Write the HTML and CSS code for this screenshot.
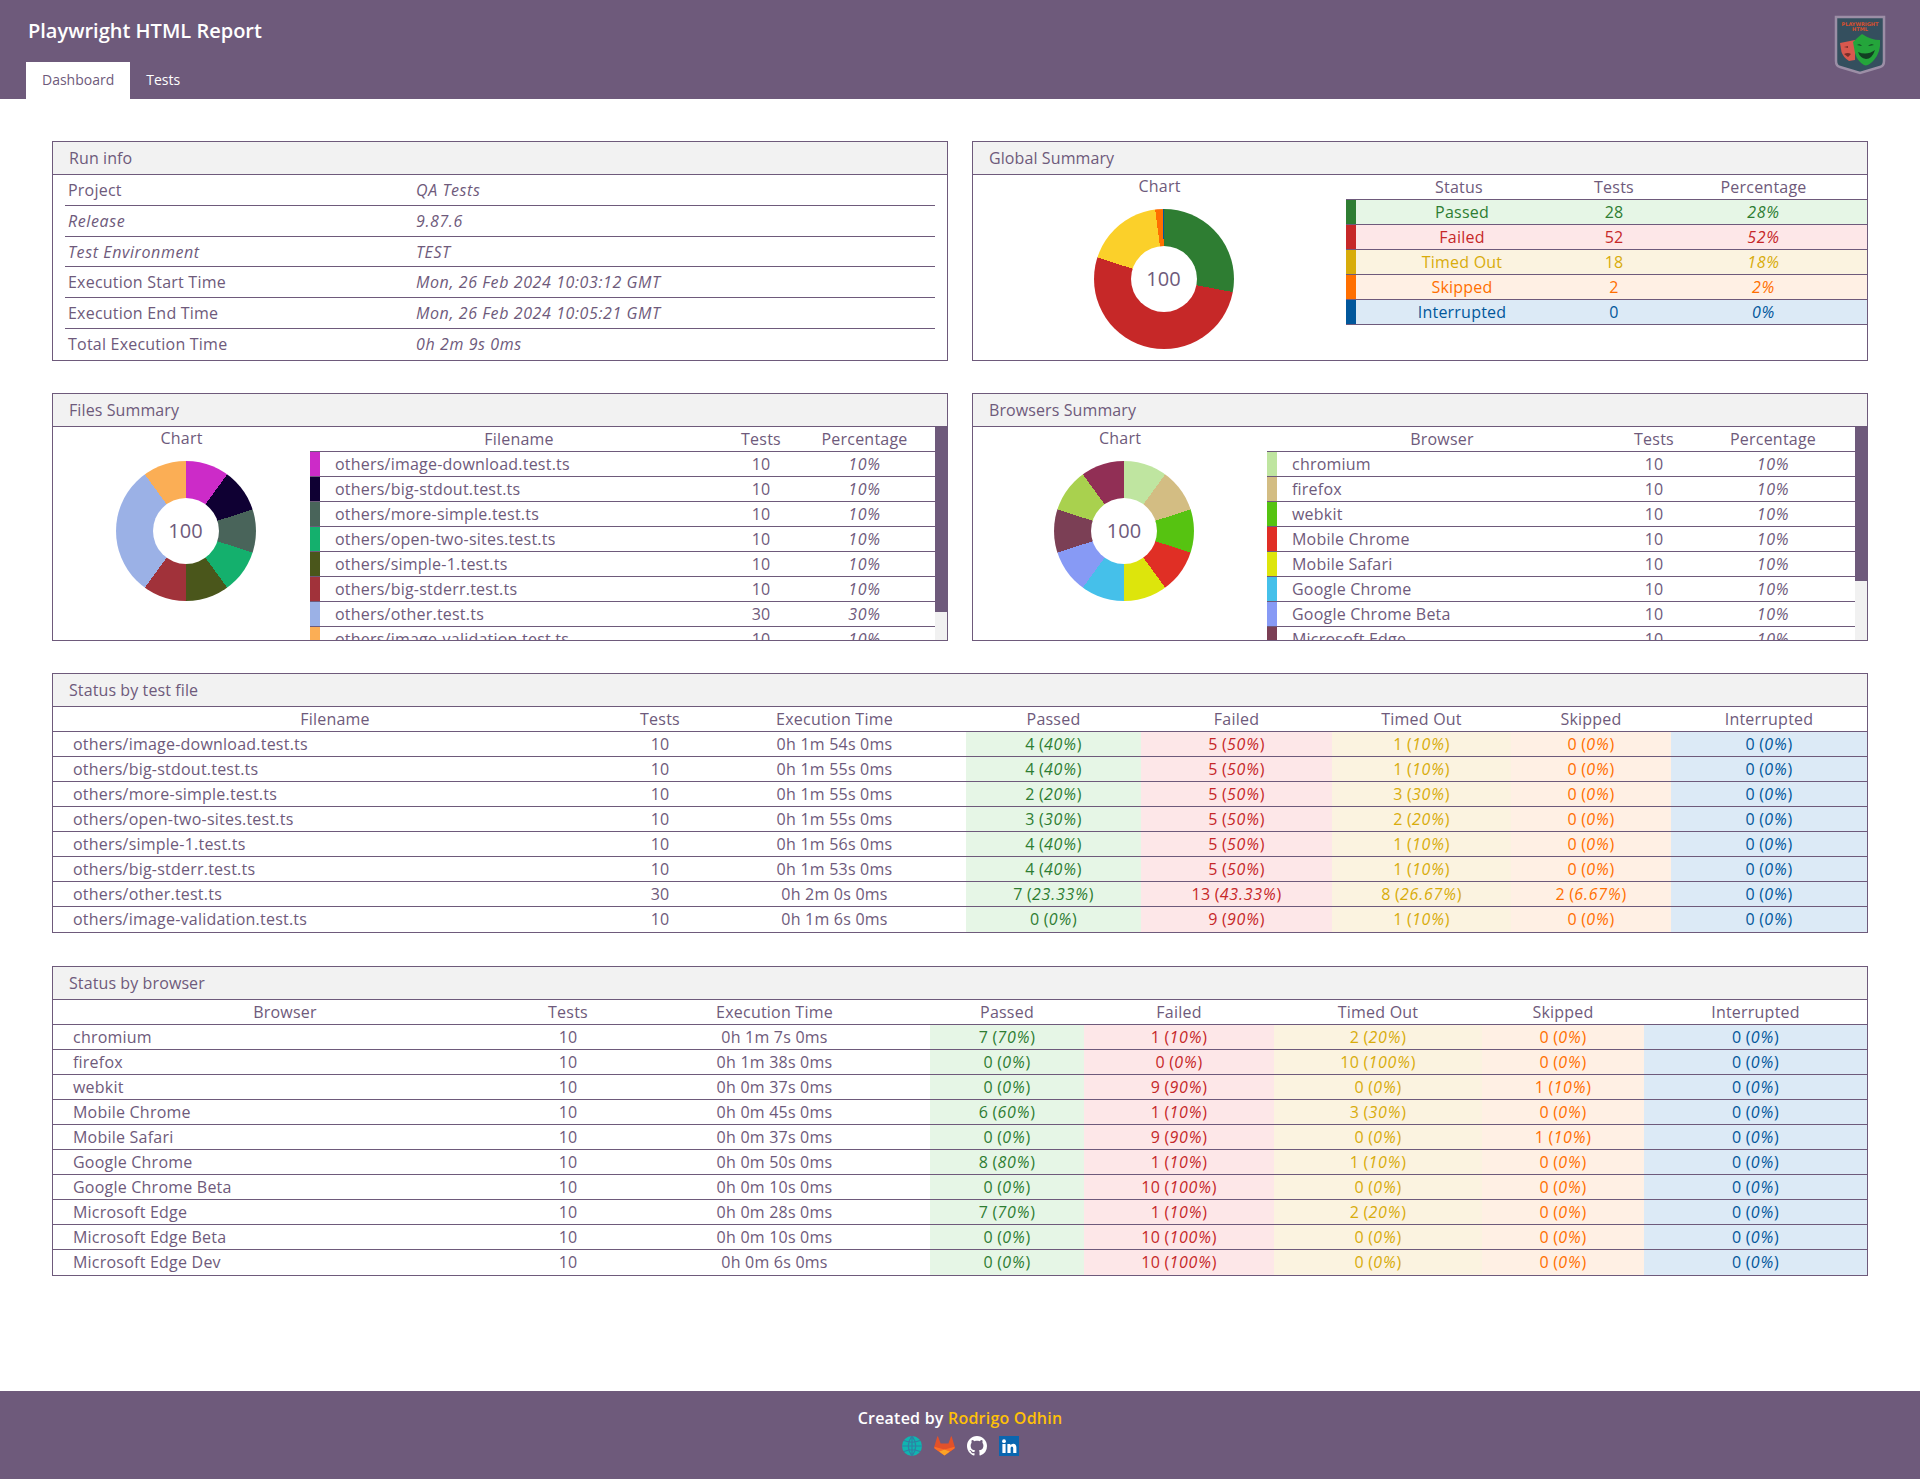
FILE: index.html
```html
<!DOCTYPE html>
<html lang="en">
<head>
  <meta charset="UTF-8">
  <title>Playwright HTML Report</title>
  <link rel="stylesheet" href="styles.css">
</head>
<body>
<header class="topbar">
  <div class="topbar-row">
    <h1 class="brand">Playwright HTML Report</h1>
    <svg class="logo" width="52" height="60" viewBox="0 0 52 60">
      <path d="M2 2H50V46Q50 51 46 52L26 58L6 52Q2 51 2 46Z" fill="#344f5e" stroke="#9c8ea6" stroke-width="2.5"/>
      <text x="26" y="11" class="logo-text" text-anchor="middle">PLAYWRIGHT</text>
      <text x="26" y="16" class="logo-text" text-anchor="middle">HTML</text>
      <path d="M6 28L21 25L21 45L15 46Q9 42 7.500 37Z" fill="#d9584e"/>
      <path d="M10 32L14 31L14 33ZM10 39Q14 37 17 39L14 42Z" fill="#7a2e2a"/>
      <path d="M19 27Q23 23 28 19Q37 25 46 25Q47 37 40 45Q34 52 30 50Q23 46 21 38Z" fill="#24a53b"/>
      <path d="M23 30Q26 28 28 31Z M34 31Q37 28 40 30Z M24 37Q33 41 41 35Q38 44 32 44Q26 43 24 37Z" fill="#123f22"/>
    </svg>
  </div>
  <nav class="tabs">
    <a class="tab tab-active">Dashboard</a>
    <a class="tab">Tests</a>
  </nav>
</header>

<main class="content">
  <div class="top-grid">
    <section class="card">
      <div class="card-title">Run info</div>
      <div class="info">
        <div class="info-row"><span class="info-key">Project</span><em>QA Tests</em></div>
        <div class="info-row"><em class="info-key">Release</em><em>9.87.6</em></div>
        <div class="info-row"><em class="info-key">Test Environment</em><em>TEST</em></div>
        <div class="info-row"><span class="info-key">Execution Start Time</span><em>Mon, 26 Feb 2024 10:03:12 GMT</em></div>
        <div class="info-row"><span class="info-key">Execution End Time</span><em>Mon, 26 Feb 2024 10:05:21 GMT</em></div>
        <div class="info-row"><span class="info-key">Total Execution Time</span><em>0h 2m 9s 0ms</em></div>
      </div>
    </section>

    <section class="card">
      <div class="card-title">Global Summary</div>
      <div class="split">
        <div class="chart-col chart-global">
          <div class="chart-head">Chart</div>
          <div class="donut donut-global"><span>100</span></div>
        </div>
        <table class="grid grid-global">
          <colgroup><col class="w10"><col style="width:212px"><col style="width:92px"><col></colgroup>
          <tr><th colspan="2">Status</th><th>Tests</th><th>Percentage</th></tr>
          <tr class="passed"><td class="bar"></td><td>Passed</td><td>28</td><td><em>28%</em></td></tr>
          <tr class="failed"><td class="bar"></td><td>Failed</td><td>52</td><td><em>52%</em></td></tr>
          <tr class="timedout"><td class="bar"></td><td>Timed Out</td><td>18</td><td><em>18%</em></td></tr>
          <tr class="skipped"><td class="bar"></td><td>Skipped</td><td>2</td><td><em>2%</em></td></tr>
          <tr class="interrupted"><td class="bar"></td><td>Interrupted</td><td>0</td><td><em>0%</em></td></tr>
        </table>
      </div>
    </section>

    <section class="card">
      <div class="card-title">Files Summary</div>
      <div class="scroll-wrap">
        <div class="scroller">
          <div class="split">
            <div class="chart-col chart-files">
              <div class="chart-head">Chart</div>
              <div class="donut donut-files"><span>100</span></div>
            </div>
            <table class="grid grid-files">
              <colgroup><col class="w10"><col style="width:408px"><col style="width:66px"><col></colgroup>
              <tr><th colspan="2">Filename</th><th>Tests</th><th>Percentage</th></tr>
              <tr><td class="bar" style="background:#cc2bc8"></td><td class="name">others/image-download.test.ts</td><td>10</td><td><em>10%</em></td></tr>
              <tr><td class="bar" style="background:#0f0033"></td><td class="name">others/big-stdout.test.ts</td><td>10</td><td><em>10%</em></td></tr>
              <tr><td class="bar" style="background:#49645a"></td><td class="name">others/more-simple.test.ts</td><td>10</td><td><em>10%</em></td></tr>
              <tr><td class="bar" style="background:#14b06d"></td><td class="name">others/open-two-sites.test.ts</td><td>10</td><td><em>10%</em></td></tr>
              <tr><td class="bar" style="background:#4a561b"></td><td class="name">others/simple-1.test.ts</td><td>10</td><td><em>10%</em></td></tr>
              <tr><td class="bar" style="background:#a1323a"></td><td class="name">others/big-stderr.test.ts</td><td>10</td><td><em>10%</em></td></tr>
              <tr><td class="bar" style="background:#9bb1e6"></td><td class="name">others/other.test.ts</td><td>30</td><td><em>30%</em></td></tr>
              <tr><td class="bar" style="background:#fbae55"></td><td class="name">others/image-validation.test.ts</td><td>10</td><td><em>10%</em></td></tr>
            </table>
          </div>
        </div>
        <div class="track"><div class="thumb" style="height:185px"></div></div>
      </div>
    </section>

    <section class="card">
      <div class="card-title">Browsers Summary</div>
      <div class="scroll-wrap">
        <div class="scroller">
          <div class="split">
            <div class="chart-col chart-browsers">
              <div class="chart-head">Chart</div>
              <div class="donut donut-browsers"><span>100</span></div>
            </div>
            <table class="grid grid-browsers">
              <colgroup><col class="w10"><col style="width:340px"><col style="width:74px"><col></colgroup>
              <tr><th colspan="2">Browser</th><th>Tests</th><th>Percentage</th></tr>
              <tr><td class="bar" style="background:#bfe5a0"></td><td class="name">chromium</td><td>10</td><td><em>10%</em></td></tr>
              <tr><td class="bar" style="background:#d3bd83"></td><td class="name">firefox</td><td>10</td><td><em>10%</em></td></tr>
              <tr><td class="bar" style="background:#56c311"></td><td class="name">webkit</td><td>10</td><td><em>10%</em></td></tr>
              <tr><td class="bar" style="background:#e02f25"></td><td class="name">Mobile Chrome</td><td>10</td><td><em>10%</em></td></tr>
              <tr><td class="bar" style="background:#dde50c"></td><td class="name">Mobile Safari</td><td>10</td><td><em>10%</em></td></tr>
              <tr><td class="bar" style="background:#45c0ea"></td><td class="name">Google Chrome</td><td>10</td><td><em>10%</em></td></tr>
              <tr><td class="bar" style="background:#879af5"></td><td class="name">Google Chrome Beta</td><td>10</td><td><em>10%</em></td></tr>
              <tr><td class="bar" style="background:#7b3f55"></td><td class="name">Microsoft Edge</td><td>10</td><td><em>10%</em></td></tr>
              <tr><td class="bar" style="background:#a9d14e"></td><td class="name">Microsoft Edge Beta</td><td>10</td><td><em>10%</em></td></tr>
              <tr><td class="bar" style="background:#912f55"></td><td class="name">Microsoft Edge Dev</td><td>10</td><td><em>10%</em></td></tr>
            </table>
          </div>
        </div>
        <div class="track"><div class="thumb" style="height:154px"></div></div>
      </div>
    </section>
  </div>

  <section class="card card-wide">
    <div class="card-title">Status by test file</div>
    <table class="grid grid-status">
      <colgroup><col style="width:564px"><col style="width:86px"><col style="width:263px"><col style="width:175px"><col style="width:191px"><col style="width:179px"><col style="width:160px"><col></colgroup>
      <tr><th>Filename</th><th>Tests</th><th>Execution Time</th><th>Passed</th><th>Failed</th><th>Timed Out</th><th>Skipped</th><th>Interrupted</th></tr>
      <tr><td class="left">others/image-download.test.ts</td><td>10</td><td>0h 1m 54s 0ms</td><td class="passed">4 (<em>40%</em>)</td><td class="failed">5 (<em>50%</em>)</td><td class="timedout">1 (<em>10%</em>)</td><td class="skipped">0 (<em>0%</em>)</td><td class="interrupted">0 (<em>0%</em>)</td></tr>
      <tr><td class="left">others/big-stdout.test.ts</td><td>10</td><td>0h 1m 55s 0ms</td><td class="passed">4 (<em>40%</em>)</td><td class="failed">5 (<em>50%</em>)</td><td class="timedout">1 (<em>10%</em>)</td><td class="skipped">0 (<em>0%</em>)</td><td class="interrupted">0 (<em>0%</em>)</td></tr>
      <tr><td class="left">others/more-simple.test.ts</td><td>10</td><td>0h 1m 55s 0ms</td><td class="passed">2 (<em>20%</em>)</td><td class="failed">5 (<em>50%</em>)</td><td class="timedout">3 (<em>30%</em>)</td><td class="skipped">0 (<em>0%</em>)</td><td class="interrupted">0 (<em>0%</em>)</td></tr>
      <tr><td class="left">others/open-two-sites.test.ts</td><td>10</td><td>0h 1m 55s 0ms</td><td class="passed">3 (<em>30%</em>)</td><td class="failed">5 (<em>50%</em>)</td><td class="timedout">2 (<em>20%</em>)</td><td class="skipped">0 (<em>0%</em>)</td><td class="interrupted">0 (<em>0%</em>)</td></tr>
      <tr><td class="left">others/simple-1.test.ts</td><td>10</td><td>0h 1m 56s 0ms</td><td class="passed">4 (<em>40%</em>)</td><td class="failed">5 (<em>50%</em>)</td><td class="timedout">1 (<em>10%</em>)</td><td class="skipped">0 (<em>0%</em>)</td><td class="interrupted">0 (<em>0%</em>)</td></tr>
      <tr><td class="left">others/big-stderr.test.ts</td><td>10</td><td>0h 1m 53s 0ms</td><td class="passed">4 (<em>40%</em>)</td><td class="failed">5 (<em>50%</em>)</td><td class="timedout">1 (<em>10%</em>)</td><td class="skipped">0 (<em>0%</em>)</td><td class="interrupted">0 (<em>0%</em>)</td></tr>
      <tr><td class="left">others/other.test.ts</td><td>30</td><td>0h 2m 0s 0ms</td><td class="passed">7 (<em>23.33%</em>)</td><td class="failed">13 (<em>43.33%</em>)</td><td class="timedout">8 (<em>26.67%</em>)</td><td class="skipped">2 (<em>6.67%</em>)</td><td class="interrupted">0 (<em>0%</em>)</td></tr>
      <tr><td class="left">others/image-validation.test.ts</td><td>10</td><td>0h 1m 6s 0ms</td><td class="passed">0 (<em>0%</em>)</td><td class="failed">9 (<em>90%</em>)</td><td class="timedout">1 (<em>10%</em>)</td><td class="skipped">0 (<em>0%</em>)</td><td class="interrupted">0 (<em>0%</em>)</td></tr>
    </table>
  </section>

  <section class="card card-wide">
    <div class="card-title">Status by browser</div>
    <table class="grid grid-status">
      <colgroup><col style="width:464px"><col style="width:102px"><col style="width:311px"><col style="width:154px"><col style="width:190px"><col style="width:208px"><col style="width:162px"><col></colgroup>
      <tr><th>Browser</th><th>Tests</th><th>Execution Time</th><th>Passed</th><th>Failed</th><th>Timed Out</th><th>Skipped</th><th>Interrupted</th></tr>
      <tr><td class="left">chromium</td><td>10</td><td>0h 1m 7s 0ms</td><td class="passed">7 (<em>70%</em>)</td><td class="failed">1 (<em>10%</em>)</td><td class="timedout">2 (<em>20%</em>)</td><td class="skipped">0 (<em>0%</em>)</td><td class="interrupted">0 (<em>0%</em>)</td></tr>
      <tr><td class="left">firefox</td><td>10</td><td>0h 1m 38s 0ms</td><td class="passed">0 (<em>0%</em>)</td><td class="failed">0 (<em>0%</em>)</td><td class="timedout">10 (<em>100%</em>)</td><td class="skipped">0 (<em>0%</em>)</td><td class="interrupted">0 (<em>0%</em>)</td></tr>
      <tr><td class="left">webkit</td><td>10</td><td>0h 0m 37s 0ms</td><td class="passed">0 (<em>0%</em>)</td><td class="failed">9 (<em>90%</em>)</td><td class="timedout">0 (<em>0%</em>)</td><td class="skipped">1 (<em>10%</em>)</td><td class="interrupted">0 (<em>0%</em>)</td></tr>
      <tr><td class="left">Mobile Chrome</td><td>10</td><td>0h 0m 45s 0ms</td><td class="passed">6 (<em>60%</em>)</td><td class="failed">1 (<em>10%</em>)</td><td class="timedout">3 (<em>30%</em>)</td><td class="skipped">0 (<em>0%</em>)</td><td class="interrupted">0 (<em>0%</em>)</td></tr>
      <tr><td class="left">Mobile Safari</td><td>10</td><td>0h 0m 37s 0ms</td><td class="passed">0 (<em>0%</em>)</td><td class="failed">9 (<em>90%</em>)</td><td class="timedout">0 (<em>0%</em>)</td><td class="skipped">1 (<em>10%</em>)</td><td class="interrupted">0 (<em>0%</em>)</td></tr>
      <tr><td class="left">Google Chrome</td><td>10</td><td>0h 0m 50s 0ms</td><td class="passed">8 (<em>80%</em>)</td><td class="failed">1 (<em>10%</em>)</td><td class="timedout">1 (<em>10%</em>)</td><td class="skipped">0 (<em>0%</em>)</td><td class="interrupted">0 (<em>0%</em>)</td></tr>
      <tr><td class="left">Google Chrome Beta</td><td>10</td><td>0h 0m 10s 0ms</td><td class="passed">0 (<em>0%</em>)</td><td class="failed">10 (<em>100%</em>)</td><td class="timedout">0 (<em>0%</em>)</td><td class="skipped">0 (<em>0%</em>)</td><td class="interrupted">0 (<em>0%</em>)</td></tr>
      <tr><td class="left">Microsoft Edge</td><td>10</td><td>0h 0m 28s 0ms</td><td class="passed">7 (<em>70%</em>)</td><td class="failed">1 (<em>10%</em>)</td><td class="timedout">2 (<em>20%</em>)</td><td class="skipped">0 (<em>0%</em>)</td><td class="interrupted">0 (<em>0%</em>)</td></tr>
      <tr><td class="left">Microsoft Edge Beta</td><td>10</td><td>0h 0m 10s 0ms</td><td class="passed">0 (<em>0%</em>)</td><td class="failed">10 (<em>100%</em>)</td><td class="timedout">0 (<em>0%</em>)</td><td class="skipped">0 (<em>0%</em>)</td><td class="interrupted">0 (<em>0%</em>)</td></tr>
      <tr><td class="left">Microsoft Edge Dev</td><td>10</td><td>0h 0m 6s 0ms</td><td class="passed">0 (<em>0%</em>)</td><td class="failed">10 (<em>100%</em>)</td><td class="timedout">0 (<em>0%</em>)</td><td class="skipped">0 (<em>0%</em>)</td><td class="interrupted">0 (<em>0%</em>)</td></tr>
    </table>
  </section>
</main>

<footer class="footer">
  <div class="credit">Created by <span class="author">Rodrigo Odhin</span></div>
  <div class="socials">
    <svg width="20" height="20" viewBox="0 0 20 20" fill="none">
      <circle cx="10" cy="10" r="10" fill="#0fb5b0"/>
      <path d="M10 0V20M0 10H20M2 4.500Q10 8 18 4.500M2 15.500Q10 12 18 15.500M10 0Q2.500 10 10 20M10 0Q17.500 10 10 20" stroke="#2f7fa3" stroke-width="1.200"/>
    </svg>
    <svg width="21" height="20" viewBox="0 0 21 20">
      <path d="M10.500 19.500L0.600 12.400Q0 11.900 0.200 11.100L3.300 0.600Q3.500 0 4 0.600L6.600 7.500H14.400L17 0.600Q17.500 0 17.700 0.600L20.800 11.100Q21 11.900 20.400 12.400Z" fill="#e2512a"/>
      <path d="M0.300 10.800L10.500 13.500L20.700 10.800L20.400 12.400L16 15.500L10.500 13.500L5 15.500L0.600 12.400Z" fill="#fc6d26"/>
      <path d="M10.500 19.500L5 15.500L10.500 13.500L16 15.500Z" fill="#fca326"/>
    </svg>
    <svg width="20" height="20" viewBox="0 0 16 16">
      <path fill="#fff" d="M8 0C3.58 0 0 3.58 0 8c0 3.54 2.29 6.53 5.47 7.59.4.07.55-.17.55-.38 0-.19-.01-.82-.01-1.49-2.01.37-2.53-.49-2.69-.94-.09-.23-.48-.94-.82-1.13-.28-.15-.68-.52-.01-.53.63-.01 1.08.58 1.23.82.72 1.21 1.87.87 2.33.66.07-.52.28-.87.51-1.07-1.78-.2-3.64-.89-3.64-3.95 0-.87.31-1.59.82-2.15-.08-.2-.36-1.02.08-2.12 0 0 .67-.21 2.2.82.64-.18 1.32-.27 2-.27.68 0 1.36.09 2 .27 1.53-1.04 2.2-.82 2.2-.82.44 1.1.16 1.92.08 2.12.51.56.82 1.27.82 2.15 0 3.07-1.87 3.75-3.65 3.95.29.25.54.73.54 1.48 0 1.07-.01 1.93-.01 2.2 0 .21.15.46.55.38A8.013 8.013 0 0016 8c0-4.42-3.58-8-8-8z"/>
    </svg>
    <svg width="20" height="20" viewBox="0 0 20 20">
      <rect width="20" height="20" fill="#0a66b0"/>
      <circle cx="5" cy="5.200" r="1.900" fill="#fff"/>
      <rect x="3.400" y="8" width="3.200" height="9" fill="#fff"/>
      <path d="M8.400 8H11.400V9.300Q12.400 7.800 14.200 7.800Q17.400 7.800 17.400 11.600V17H14.200V12.200Q14.200 10.400 12.900 10.400Q11.600 10.400 11.600 12.200V17H8.400Z" fill="#fff"/>
    </svg>
  </div>
</footer>
</body>
</html>
```

FILE: styles.css
```css
* { box-sizing: border-box; }
html, body { margin: 0; padding: 0; }
body {
  min-height: 100vh;
  display: flex;
  flex-direction: column;
  font-family: "Open Sans", "Noto Sans", sans-serif;
  font-size: 16px;
  letter-spacing: .22px;
  color: #6e5a7b;
  background: #fff;
}
em { letter-spacing: .6px; }

/* header */
.topbar { height: 99px; background: #6e5a7b; color: #fff; position: relative; display: flex; flex-direction: column; justify-content: space-between; }
.topbar-row { display: flex; justify-content: space-between; padding: 15px 34px 0 28px; }
.brand { margin: 4px 0 0; font-size: 20px; line-height: 24px; font-weight: 600; letter-spacing: 0; }
.logo { display: block; }
.logo-text { font-family: "DejaVu Sans", sans-serif; font-size: 5px; font-weight: 700; letter-spacing: 0; fill: #d9502e; }
.tabs { display: flex; padding-left: 26px; position: absolute; left: 0; bottom: 0; }
.tab { height: 37px; line-height: 36px; padding: 0 16px; font-size: 14px; letter-spacing: 0; color: #fff; }
.tab-active { background: #fff; color: #6e5a7b; }

/* layout */
.content { flex: 1; padding: 42px 52px 0; }
.top-grid { display: grid; grid-template-columns: 896px 896px; column-gap: 24px; grid-template-rows: 220px 248px; row-gap: 32px; margin-bottom: 32px; }
.card { border: 1px solid #6e5a7b; overflow: hidden; }
.card-wide { margin-bottom: 33px; }
.card-title { height: 33px; line-height: 33px; padding-left: 16px; background: #f2f2f2; border-bottom: 1px solid #6e5a7b; letter-spacing: .1px; }
.split { display: flex; align-items: flex-start; }
.scroll-wrap { display: flex; height: 214px; }
.scroller { flex: 1; min-width: 0; overflow: hidden; }
.track { width: 12px; flex: none; background: #f1f1f1; }
.thumb { background: #6e5a7b; }

/* run info */
.info { padding: 0 12px; }
.info-row { height: 30.75px; line-height: 30px; display: flex; border-bottom: 1px solid #6e5a7b; }
.info-row:last-child { border-bottom: 0; }
.info-key { width: 351px; padding-left: 3px; flex: none; }

/* charts */
.chart-col { flex: none; text-align: center; }
.chart-global { width: 373px; }
.chart-files { width: 257px; }
.chart-browsers { width: 294px; }
.chart-head { height: 25px; line-height: 23px; }
.donut {
  width: 140px;
  height: 140px;
  margin: 9px auto 0;
  position: relative;
  left: 4px;
  border-radius: 50%;
  display: flex;
  align-items: center;
  justify-content: center;
}
.donut span {
  width: 66px;
  height: 66px;
  line-height: 66px;
  border-radius: 50%;
  background: #fff;
  font-size: 20px;
  letter-spacing: 0;
}
.donut-global { background: conic-gradient(#2e7d32 0 28%, #c62828 0 80%, #fbd02a 0 98%, #ff6f00 0 99.8%, #01579b 0); }
.donut-files { background: conic-gradient(#cc2bc8 0 10%, #0f0033 0 20%, #49645a 0 30%, #14b06d 0 40%, #4a561b 0 50%, #a1323a 0 60%, #9bb1e6 0 90%, #fbae55 0); }
.donut-browsers { background: conic-gradient(#bfe5a0 0 10%, #d3bd83 0 20%, #56c311 0 30%, #e02f25 0 40%, #dde50c 0 50%, #45c0ea 0 60%, #879af5 0 70%, #7b3f55 0 80%, #a9d14e 0 90%, #912f55 0); }

/* tables */
.grid { width: 100%; border-spacing: 0; table-layout: fixed; flex: 1; }
.grid th, .grid td { height: 25px; padding: 0; font-weight: 400; line-height: 22px; text-align: center; border-bottom: 1px solid #6e5a7b; white-space: nowrap; overflow: hidden; }
.grid th { padding-bottom: 1px; }
.grid td em { letter-spacing: .8px; }
.grid tr:last-child td { border-bottom-color: transparent; }
.grid-global tr:last-child td, .grid-files tr:last-child td, .grid-browsers tr:last-child td { border-bottom-color: #6e5a7b; }
.grid-global th:first-child { padding-left: 4px; }
.w10 { width: 10px; }
.grid .name { text-align: left; padding-left: 15px; }
.grid .left { text-align: left; padding-left: 20px; }

.passed { background: #e6f6e6; color: #2e7d32; }
.failed { background: #fde7e8; color: #c62828; }
.timedout { background: #fbf3e0; color: #d8ac0b; }
.skipped { background: #fff0e4; color: #ff6f00; }
.interrupted { background: #dceaf6; color: #01579b; }
.passed .bar { background: #2e7d32; }
.failed .bar { background: #c62828; }
.timedout .bar { background: #d8ac0b; }
.skipped .bar { background: #ff6f00; }
.interrupted .bar { background: #01579b; }

/* footer */
.footer { height: 88px; background: #6e5a7b; color: #fff; text-align: center; padding-top: 15px; }
.credit { line-height: 24px; font-weight: 600; }
.author { color: #ffc107; }
.socials { display: flex; justify-content: center; align-items: center; gap: 12px; margin-top: 6px; }
.socials svg { display: block; }
```
